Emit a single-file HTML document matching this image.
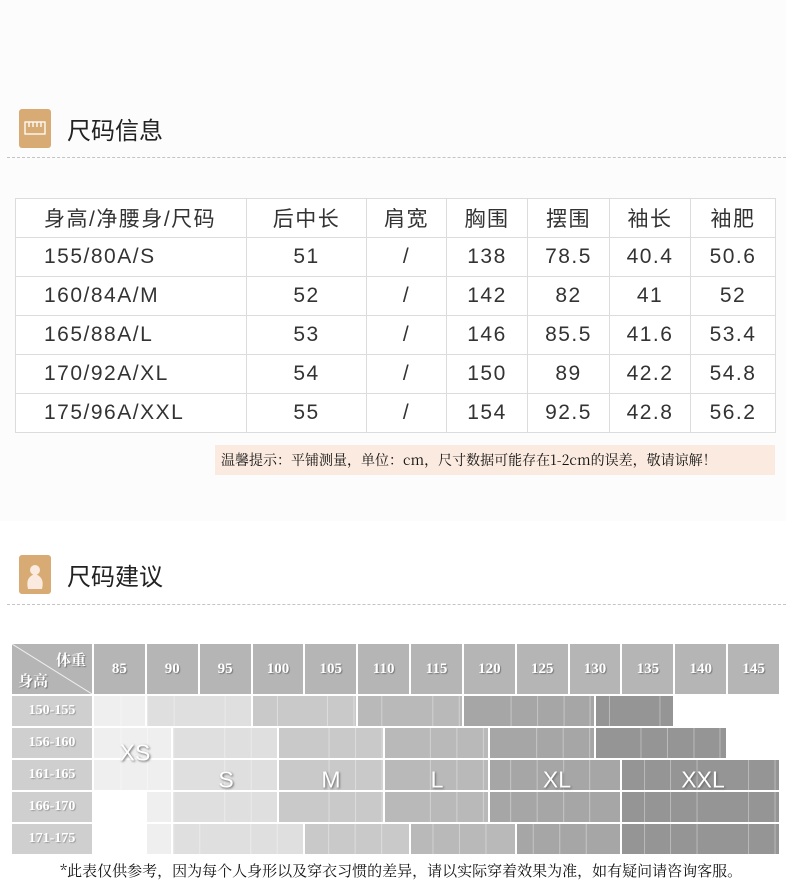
<!DOCTYPE html>
<html><head><meta charset="utf-8"><style>
*{margin:0;padding:0;box-sizing:border-box}
body{width:790px;height:879px;background:#fff;position:relative;overflow:hidden;font-family:"Liberation Sans","Noto Sans CJK SC",sans-serif;color:#222}
.top{position:absolute;left:0;top:0;width:786px;height:521px;background:#fcfcfc}
.icon{position:absolute;width:32px;height:39px;background:#d8ab74;border-radius:3px}
.title{position:absolute;font-size:24px;color:#222}
.dash{position:absolute;left:7px;width:779px;border-top:1px dashed #c4c4c4}
table{position:absolute;left:15px;top:198px;border-collapse:collapse;background:#fff}
td{border:1px solid #dcdcdc;height:39px;font-size:21px;color:#333;text-align:center;padding:0;letter-spacing:1.5px}
td:first-child{text-align:left;padding-left:28px}
.note{position:absolute;left:215px;top:445px;width:560px;height:30px;background:#fbeadf;font-family:"Noto Serif CJK SC",serif;font-size:14px;line-height:30px;padding-left:6px;color:#111}
.c{position:absolute}
.hd{position:absolute;top:644px;height:50px;background:#b5b5b5;color:#fff;font-family:"Liberation Serif","Noto Serif CJK SC",serif;font-weight:bold;font-size:15px;text-align:center;line-height:50px;text-shadow:1px 1px 1px #777}
.rl{position:absolute;left:12px;width:80px;height:30px;background:#cfcfcf;color:#fff;font-family:"Liberation Serif",serif;font-weight:bold;font-size:14px;line-height:30px;text-align:center;text-shadow:1px 1px 1px #999}
.lab{position:absolute;color:#fff;font-size:23px;text-shadow:1px 1px 2px #666;transform:translate(-50%,-50%)}
.foot{position:absolute;left:60px;top:860px;font-size:15px;color:#111;font-family:"Noto Serif CJK SC",serif}
</style></head><body>
<div class="top"></div>
<div class="icon" style="left:19px;top:109px"><svg width="32" height="39"><rect x="6" y="13" width="20" height="12" fill="none" stroke="#fff" stroke-width="1.3"/><path d="M10 13v5M14 13v5M18 13v5M22 13v5" stroke="#fff" stroke-width="1.3"/></svg></div>
<div class="title" style="left:67px;top:111px">尺码信息</div>
<div class="dash" style="top:157px"></div>
<table>
<tr><td style="width:231px">身高/净腰身/尺码</td><td style="width:120px">后中长</td><td style="width:80px">肩宽</td><td style="width:81px">胸围</td><td style="width:82px">摆围</td><td style="width:81px">袖长</td><td style="width:85px">袖肥</td></tr>
<tr><td>155/80A/S</td><td>51</td><td>/</td><td>138</td><td>78.5</td><td>40.4</td><td>50.6</td></tr>
<tr><td>160/84A/M</td><td>52</td><td>/</td><td>142</td><td>82</td><td>41</td><td>52</td></tr>
<tr><td>165/88A/L</td><td>53</td><td>/</td><td>146</td><td>85.5</td><td>41.6</td><td>53.4</td></tr>
<tr><td>170/92A/XL</td><td>54</td><td>/</td><td>150</td><td>89</td><td>42.2</td><td>54.8</td></tr>
<tr><td>175/96A/XXL</td><td>55</td><td>/</td><td>154</td><td>92.5</td><td>42.8</td><td>56.2</td></tr>
</table>
<div class="note">温馨提示：平铺测量，单位：cm，尺寸数据可能存在1-2cm的误差，敬请谅解！</div>
<div class="icon" style="left:19px;top:555px"><svg width="32" height="39"><circle cx="16" cy="15" r="5" fill="#fbeadf"/><path d="M9 34q-3-12 7-15q10 3 7 15z" fill="#fbeadf"/></svg></div>
<div class="title" style="left:67px;top:557px">尺码建议</div>
<div class="dash" style="top:604px"></div>
<div class="hd" style="left:12px;width:80px;line-height:normal"><svg width="80" height="50" style="position:absolute;left:0;top:0"><line x1="0" y1="0" x2="80" y2="50" stroke="#eee" stroke-width="1"/></svg><span style="position:absolute;right:6px;top:5px">体重</span><span style="position:absolute;left:6px;top:26px">身高</span></div>
<div id="g"></div>
<div class="lab" style="left:135px;top:753px">XS</div>
<div class="lab" style="left:226px;top:780px">S</div>
<div class="lab" style="left:331px;top:780px">M</div>
<div class="lab" style="left:437px;top:780px">L</div>
<div class="lab" style="left:557px;top:780px">XL</div>
<div class="lab" style="left:703px;top:780px">XXL</div>
<div class="foot">*此表仅供参考，因为每个人身形以及穿衣习惯的差异，请以实际穿着效果为准，如有疑问请咨询客服。</div>
<script>
var g=document.getElementById('g'),h='';
var w=['85','90','95','100','105','110','115','120','125','130','135','140','145'];
var cw=(780-93)/13;
for(var i=0;i<13;i++){h+='<div class="hd" style="left:'+(93+i*cw+1)+'px;width:'+(cw-2)+'px">'+w[i]+'</div>';}
var rows=['150-155','156-160','161-165','166-170','171-175'];
var col=['#fff','#efefef','#dfdfdf','#c9c9c9','#b9b9b9','#a6a6a6','#959595'];
var R=[
[[0,2,1],[2,6,2],[6,10,3],[10,14,4],[14,19,5],[19,22,6],[22,26,0]],
[[0,3,1],[3,7,2],[7,11,3],[11,15,4],[15,19,5],[19,24,6],[24,26,0]],
[[0,3,1],[3,7,2],[7,11,3],[11,15,4],[15,20,5],[20,26,6]],
[[0,2,0],[2,3,1],[3,7,2],[7,11,3],[11,15,4],[15,20,5],[20,26,6]],
[[0,2,0],[2,3,1],[3,8,2],[8,12,3],[12,16,4],[16,20,5],[20,26,6]]];
var hw=cw/2;
for(var r=0;r<5;r++){
 var y=696+r*32;
 h+='<div class="rl" style="top:'+y+'px">'+rows[r]+'</div>';
 R[r].forEach(function(s){
  var x0=93+s[0]*hw+1,x1=93+s[1]*hw-1;
  if(s[2]==0)return;
  var c=col[s[2]];
  h+='<div class="c" style="left:'+x0+'px;top:'+y+'px;width:'+(x1-x0)+'px;height:30px;background:'+c+';background-image:repeating-linear-gradient(90deg,transparent 0,transparent '+(hw-1)+'px,rgba(255,255,255,.35) '+(hw-1)+'px,rgba(255,255,255,.35) '+hw+'px);background-position:'+(-(s[0]*hw)+1)+'px 0"></div>';
 });
}
g.innerHTML=h;
</script>
</body></html>
